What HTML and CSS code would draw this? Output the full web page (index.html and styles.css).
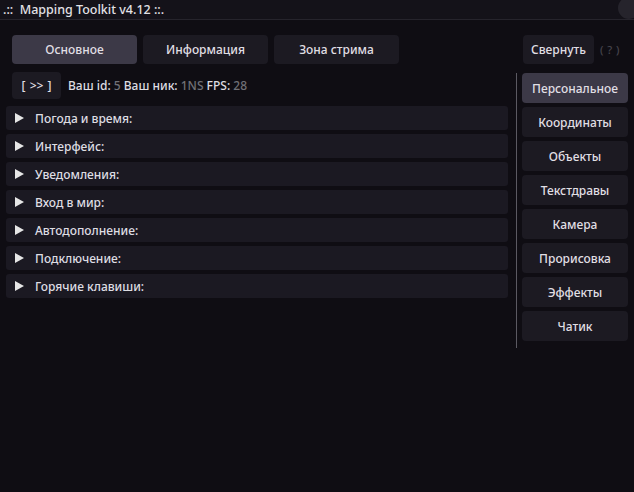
FILE: index.html
```html
<!DOCTYPE html>
<html lang="ru">
<head>
<meta charset="utf-8">
<title>Mapping Toolkit</title>
<link rel="stylesheet" href="styles.css">
</head>
<body>
<div class="window">
  <div class="titlebar">
    <span class="title">.::&nbsp; Mapping Toolkit v4.12 ::.</span>
    <span class="close-dot"></span>
  </div>
  <div class="main">
    <div class="left">
      <div class="tabs">
        <div class="btn tab active">Основное</div>
        <div class="btn tab">Информация</div>
        <div class="btn tab">Зона стрима</div>
      </div>
      <div class="info">
        <div class="btn small">[ &gt;&gt; ]</div>
        <div class="info-text">Ваш id: <span class="val">5</span> Ваш ник: <span class="val">1NS</span> FPS: <span class="val">28</span></div>
      </div>
      <div class="headers">
        <div class="header"><svg class="arrow" width="9" height="10" viewBox="0 0 9 10"><polygon points="0,0 9,5 0,10" fill="#e6e6e6"/></svg><span>Погода и время:</span></div>
        <div class="header"><svg class="arrow" width="9" height="10" viewBox="0 0 9 10"><polygon points="0,0 9,5 0,10" fill="#e6e6e6"/></svg><span>Интерфейс:</span></div>
        <div class="header"><svg class="arrow" width="9" height="10" viewBox="0 0 9 10"><polygon points="0,0 9,5 0,10" fill="#e6e6e6"/></svg><span>Уведомления:</span></div>
        <div class="header"><svg class="arrow" width="9" height="10" viewBox="0 0 9 10"><polygon points="0,0 9,5 0,10" fill="#e6e6e6"/></svg><span>Вход в мир:</span></div>
        <div class="header"><svg class="arrow" width="9" height="10" viewBox="0 0 9 10"><polygon points="0,0 9,5 0,10" fill="#e6e6e6"/></svg><span>Автодополнение:</span></div>
        <div class="header"><svg class="arrow" width="9" height="10" viewBox="0 0 9 10"><polygon points="0,0 9,5 0,10" fill="#e6e6e6"/></svg><span>Подключение:</span></div>
        <div class="header"><svg class="arrow" width="9" height="10" viewBox="0 0 9 10"><polygon points="0,0 9,5 0,10" fill="#e6e6e6"/></svg><span>Горячие клавиши:</span></div>
      </div>
    </div>
    <div class="right">
      <div class="top-right">
        <div class="btn collapse">Свернуть</div>
        <span class="help">( ? )</span>
      </div>
      <div class="sidebar">
        <div class="btn side active">Персональное</div>
        <div class="btn side">Координаты</div>
        <div class="btn side">Объекты</div>
        <div class="btn side">Текстдравы</div>
        <div class="btn side">Камера</div>
        <div class="btn side">Прорисовка</div>
        <div class="btn side">Эффекты</div>
        <div class="btn side">Чатик</div>
      </div>
    </div>
  </div>
</div>
</body>
</html>
```
FILE: styles.css
```css
* { box-sizing: border-box; }
html, body {
  margin: 0;
  padding: 0;
  background: #0f0d13;
}
body {
  width: 634px;
  height: 492px;
  overflow: hidden;
  font-family: "Noto Sans", "DejaVu Sans", sans-serif;
  font-size: 12px;
  font-weight: 500;
  color: #dedde2;
}
.window {
  position: relative;
  width: 634px;
  height: 492px;
  background: #0f0d13;
}
.titlebar {
  position: relative;
  height: 20px;
  background: #141219;
  border-bottom: 1px solid #26242c;
  padding-left: 3px;
  display: flex;
  align-items: center;
  overflow: hidden;
}
.title {
  color: #e2e1e6;
  font-size: 12.5px;
  line-height: 18px;
  white-space: pre;
}
.close-dot {
  position: absolute;
  right: -6px;
  top: -3px;
  width: 22px;
  height: 22px;
  border-radius: 50%;
  background: #26242c;
}
.main {
  display: flex;
  padding-top: 15px;
}
.left {
  width: 502px;
  margin-left: 6px;
}
.btn {
  display: flex;
  align-items: center;
  justify-content: center;
  background: #1c1a22;
  border-radius: 4px;
  color: #e0dfe4;
}
.btn.active {
  background: #3c3947;
}
.tabs {
  display: flex;
  gap: 6px;
  margin-left: 6px;
}
.tab {
  width: 125px;
  height: 29px;
}
.info {
  display: flex;
  align-items: center;
  margin-top: 8px;
  margin-left: 6px;
  height: 27px;
}
.small {
  width: 49px;
  height: 27px;
  word-spacing: 1px;
}
.info-text {
  margin-left: 7px;
  color: #dedde2;
}
.val {
  color: #707076;
}
.headers {
  display: flex;
  flex-direction: column;
  gap: 4px;
  margin-top: 7px;
}
.header {
  height: 24px;
  background: #1b1922;
  border-radius: 3px;
  display: flex;
  align-items: center;
  padding-left: 9px;
}
.arrow {
  flex: none;
  margin-right: 11px;
}
.right {
  margin-left: 8px;
}
.top-right {
  display: flex;
  align-items: center;
  padding-left: 7px;
  height: 29px;
}
.collapse {
  width: 71px;
  height: 29px;
}
.help {
  margin-left: 6px;
  color: #46444c;
  font-size: 11px;
  word-spacing: 1px;
}
.sidebar {
  margin-top: 9px;
  border-left: 1px solid #5b5962;
  padding: 0 0 7px 5px;
  display: flex;
  flex-direction: column;
  gap: 4px;
}
.side {
  width: 106px;
  height: 30px;
}
```
